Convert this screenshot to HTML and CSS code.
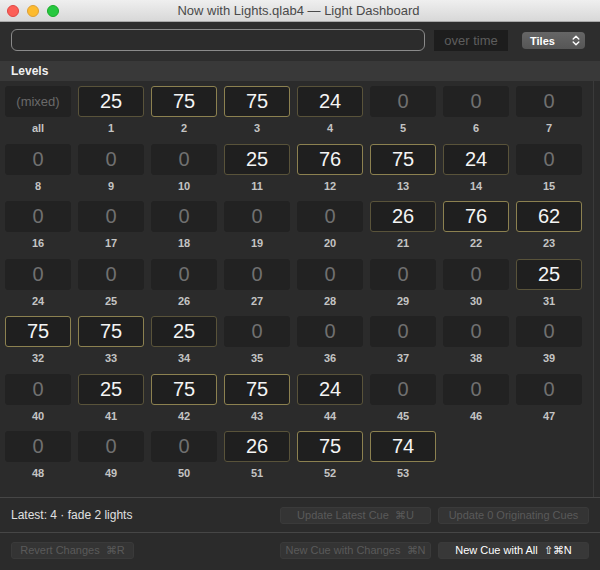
FILE: index.html
```html
<!DOCTYPE html>
<html>
<head>
<meta charset="utf-8">
<link rel="stylesheet" href="styles.css">
</head>
<body>
<div class="window">
  <div class="titlebar">
    <div class="lights">
      <span class="light red"></span><span class="light yellow"></span><span class="light green"></span>
    </div>
    <div class="title">Now with Lights.qlab4 — Light Dashboard</div>
  </div>
  <div class="toolbar">
    <div class="cmd-field"></div>
    <div class="overtime">over time</div>
    <div class="popup">
      <span>Tiles</span>
      <svg class="updown" width="8" height="11" viewBox="0 0 8 11"><path d="M1.2 4 L4 1.3 L6.8 4 M1.2 7 L4 9.7 L6.8 7" fill="none" stroke="#fff" stroke-width="1.4" stroke-linecap="round" stroke-linejoin="round"/></svg>
    </div>
  </div>
  <div class="section-head">Levels</div>
  <div class="grid-wrap">
    <div class="grid">
      <div class="cell"><div class="tile mixed">(mixed)</div><div class="lbl">all</div></div>
      <div class="cell"><div class="tile lo">25</div><div class="lbl">1</div></div>
      <div class="cell"><div class="tile hi">75</div><div class="lbl">2</div></div>
      <div class="cell"><div class="tile hi">75</div><div class="lbl">3</div></div>
      <div class="cell"><div class="tile lo">24</div><div class="lbl">4</div></div>
      <div class="cell"><div class="tile zero">0</div><div class="lbl">5</div></div>
      <div class="cell"><div class="tile zero">0</div><div class="lbl">6</div></div>
      <div class="cell"><div class="tile zero">0</div><div class="lbl">7</div></div>

      <div class="cell"><div class="tile zero">0</div><div class="lbl">8</div></div>
      <div class="cell"><div class="tile zero">0</div><div class="lbl">9</div></div>
      <div class="cell"><div class="tile zero">0</div><div class="lbl">10</div></div>
      <div class="cell"><div class="tile lo">25</div><div class="lbl">11</div></div>
      <div class="cell"><div class="tile hi">76</div><div class="lbl">12</div></div>
      <div class="cell"><div class="tile hi">75</div><div class="lbl">13</div></div>
      <div class="cell"><div class="tile lo">24</div><div class="lbl">14</div></div>
      <div class="cell"><div class="tile zero">0</div><div class="lbl">15</div></div>

      <div class="cell"><div class="tile zero">0</div><div class="lbl">16</div></div>
      <div class="cell"><div class="tile zero">0</div><div class="lbl">17</div></div>
      <div class="cell"><div class="tile zero">0</div><div class="lbl">18</div></div>
      <div class="cell"><div class="tile zero">0</div><div class="lbl">19</div></div>
      <div class="cell"><div class="tile zero">0</div><div class="lbl">20</div></div>
      <div class="cell"><div class="tile lo">26</div><div class="lbl">21</div></div>
      <div class="cell"><div class="tile hi">76</div><div class="lbl">22</div></div>
      <div class="cell"><div class="tile hi">62</div><div class="lbl">23</div></div>

      <div class="cell"><div class="tile zero">0</div><div class="lbl">24</div></div>
      <div class="cell"><div class="tile zero">0</div><div class="lbl">25</div></div>
      <div class="cell"><div class="tile zero">0</div><div class="lbl">26</div></div>
      <div class="cell"><div class="tile zero">0</div><div class="lbl">27</div></div>
      <div class="cell"><div class="tile zero">0</div><div class="lbl">28</div></div>
      <div class="cell"><div class="tile zero">0</div><div class="lbl">29</div></div>
      <div class="cell"><div class="tile zero">0</div><div class="lbl">30</div></div>
      <div class="cell"><div class="tile lo">25</div><div class="lbl">31</div></div>

      <div class="cell"><div class="tile hi">75</div><div class="lbl">32</div></div>
      <div class="cell"><div class="tile hi">75</div><div class="lbl">33</div></div>
      <div class="cell"><div class="tile lo">25</div><div class="lbl">34</div></div>
      <div class="cell"><div class="tile zero">0</div><div class="lbl">35</div></div>
      <div class="cell"><div class="tile zero">0</div><div class="lbl">36</div></div>
      <div class="cell"><div class="tile zero">0</div><div class="lbl">37</div></div>
      <div class="cell"><div class="tile zero">0</div><div class="lbl">38</div></div>
      <div class="cell"><div class="tile zero">0</div><div class="lbl">39</div></div>

      <div class="cell"><div class="tile zero">0</div><div class="lbl">40</div></div>
      <div class="cell"><div class="tile lo">25</div><div class="lbl">41</div></div>
      <div class="cell"><div class="tile hi">75</div><div class="lbl">42</div></div>
      <div class="cell"><div class="tile hi">75</div><div class="lbl">43</div></div>
      <div class="cell"><div class="tile lo">24</div><div class="lbl">44</div></div>
      <div class="cell"><div class="tile zero">0</div><div class="lbl">45</div></div>
      <div class="cell"><div class="tile zero">0</div><div class="lbl">46</div></div>
      <div class="cell"><div class="tile zero">0</div><div class="lbl">47</div></div>

      <div class="cell"><div class="tile zero">0</div><div class="lbl">48</div></div>
      <div class="cell"><div class="tile zero">0</div><div class="lbl">49</div></div>
      <div class="cell"><div class="tile zero">0</div><div class="lbl">50</div></div>
      <div class="cell"><div class="tile lo">26</div><div class="lbl">51</div></div>
      <div class="cell"><div class="tile hi">75</div><div class="lbl">52</div></div>
      <div class="cell"><div class="tile hi">74</div><div class="lbl">53</div></div>
    </div>
  </div>
  <div class="footer">
    <div class="frow first">
      <div class="latest">Latest: 4 · fade 2 lights</div>
      <div class="btn">Update Latest Cue &nbsp;⌘U</div>
      <div class="btn">Update 0 Originating Cues</div>
    </div>
    <div class="frow second">
      <div class="btn revert">Revert Changes &nbsp;⌘R</div>
      <div class="spacer"></div>
      <div class="btn">New Cue with Changes &nbsp;⌘N</div>
      <div class="btn active">New Cue with All &nbsp;⇧⌘N</div>
    </div>
  </div>
</div>
</body>
</html>
```
FILE: styles.css
```css
html, body {
  margin: 0;
  padding: 0;
}
body {
  width: 600px;
  height: 570px;
  overflow: hidden;
  background: #2b2b2b;
  font-family: "Liberation Sans", Arial, sans-serif;
}
.window {
  width: 600px;
  height: 570px;
  display: flex;
  flex-direction: column;
  background: #2b2b2b;
}
.titlebar {
  height: 22px;
  flex: none;
  background: linear-gradient(#efefef, #d8d8d8);
  border-bottom: 1px solid #a8a8a8;
  box-sizing: border-box;
  display: flex;
  align-items: center;
}
.lights {
  display: flex;
  gap: 8px;
  padding-left: 7px;
}
.light {
  width: 12px;
  height: 12px;
  border-radius: 50%;
  box-sizing: border-box;
}
.red { background: #fc5f57; border: 1px solid #df4744; }
.yellow { background: #fdbb2e; border: 1px solid #de9f34; }
.green { background: #27c840; border: 1px solid #1aab29; }
.title {
  flex: 1;
  text-align: center;
  font-size: 13px;
  color: #4a4a4a;
  margin-left: -50px;
  padding-right: 12px;
}
.toolbar {
  height: 39px;
  flex: none;
  box-sizing: border-box;
  padding: 7px 15px 0 11px;
  display: flex;
  align-items: flex-start;
  background: #2d2d2d;
}
.cmd-field {
  width: 414px;
  height: 22px;
  box-sizing: border-box;
  border: 1px solid #8a8a8a;
  border-radius: 6px;
  background: #2c2c2c;
}
.overtime {
  margin-left: 9px;
  margin-top: 1px;
  width: 74px;
  height: 21px;
  background: #1d1d1d;
  color: #5e5e5e;
  font-size: 13px;
  line-height: 21px;
  text-align: center;
}
.popup {
  margin-left: 14px;
  margin-top: 3px;
  width: 63px;
  height: 17px;
  box-sizing: border-box;
  border-radius: 4px;
  background: linear-gradient(#666, #565656);
  display: flex;
  align-items: center;
  justify-content: space-between;
  padding: 0 5px 0 8px;
  color: #fff;
  font-size: 11px;
  font-weight: bold;
}
.section-head {
  height: 20px;
  flex: none;
  background: #393939;
  color: #f0f0f0;
  font-size: 12px;
  font-weight: bold;
  line-height: 20px;
  padding-left: 11px;
}
.grid-wrap {
  height: 416px;
  flex: none;
  box-sizing: border-box;
  width: 594px;
  border-right: 1px solid #3a3a3a;
  background: #2b2b2b;
  padding: 5px 0 0 5px;
}
.grid {
  display: grid;
  grid-template-columns: repeat(8, 66px);
  column-gap: 7px;
  row-gap: 4.5px;
}
.cell {
  display: flex;
  flex-direction: column;
}
.tile {
  height: 31px;
  box-sizing: border-box;
  border-radius: 3px;
  background: #1f1f1f;
  border: 1px solid #1f1f1f;
  color: #f4f4f4;
  font-size: 20px;
  line-height: 29px;
  text-align: center;
}
.tile.zero {
  color: #707070;
  background: #222;
  border-color: #222;
}
.tile.mixed {
  color: #6a6a6a;
  font-size: 13px;
  background: #222;
  border-color: #222;
}
.tile.lo {
  border-color: #59533a;
}
.tile.hi {
  border-color: #8c8150;
}
.lbl {
  height: 22px;
  line-height: 22px;
  text-align: center;
  font-size: 11px;
  font-weight: bold;
  color: #c4c4c4;
}
.footer {
  flex: 1;
  background: #2b2b2b;
  display: flex;
  flex-direction: column;
}
.frow {
  display: flex;
  align-items: center;
  gap: 7px;
  padding: 0 11px;
  box-sizing: border-box;
}
.frow.first {
  height: 35px;
  border-top: 1px solid #464646;
}
.frow.second {
  flex: 1;
  border-top: 1px solid #464646;
  align-items: flex-start;
  padding-top: 9px;
}
.latest {
  flex: 1;
  font-size: 12px;
  color: #e0e0e0;
}
.spacer { flex: 1; }
.btn {
  width: 151px;
  height: 17px;
  box-sizing: border-box;
  border-radius: 3px;
  background: #343434;
  border: 1px solid #3a3a3a;
  color: #5a5a5a;
  font-size: 11px;
  line-height: 15px;
  text-align: center;
  white-space: nowrap;
}
.btn.revert {
  width: 123px;
}
.btn.active {
  color: #fff;
  background: #383838;
}
```
